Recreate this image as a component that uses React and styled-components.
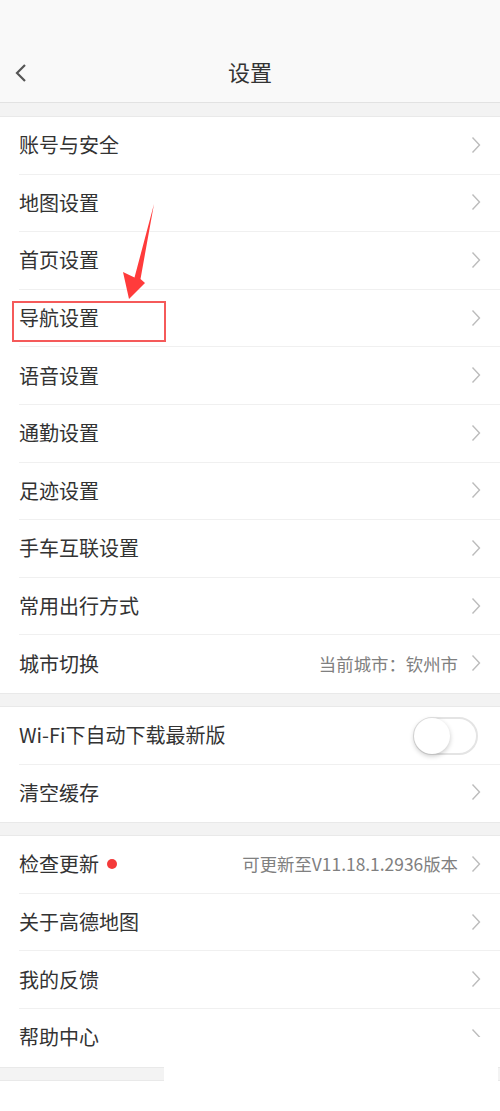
import styled, { createGlobalStyle } from 'styled-components';

const GlobalStyle = createGlobalStyle`
  html, body {
    margin: 0;
    padding: 0;
    background: #ffffff;
  }
  body {
    font-family: "Noto Sans CJK SC", "Noto Sans", sans-serif;
    color: #333333;
  }
`;

const groups = [
  [
    { label: '账号与安全' },
    { label: '地图设置' },
    { label: '首页设置' },
    { label: '导航设置' },
    { label: '语音设置' },
    { label: '通勤设置' },
    { label: '足迹设置' },
    { label: '手车互联设置' },
    { label: '常用出行方式' },
    { label: '城市切换', extra: '当前城市：钦州市' },
  ],
  [
    { label: 'Wi-Fi下自动下载最新版', toggle: true },
    { label: '清空缓存' },
  ],
  [
    { label: '检查更新', dot: true, extra: '可更新至V11.18.1.2936版本' },
    { label: '关于高德地图' },
    { label: '我的反馈' },
    { label: '帮助中心' },
  ],
];

const Chevron = () => (
  <svg width="10" height="18" viewBox="0 0 10 18">
    <path d="M1.5 1.5 L8.5 9 L1.5 16.5" fill="none" stroke="#bcbcbc" strokeWidth="1.4" />
  </svg>
);

const BackIcon = () => (
  <svg width="14" height="20" viewBox="0 0 14 20">
    <path d="M11 2 L3 10 L11 18" fill="none" stroke="#555" strokeWidth="2.2" />
  </svg>
);

const App = () => {
  return (
    <Page>
      <GlobalStyle />
      <Header>
        <StatusSpace />
        <NavBar>
          <BackButton><BackIcon /></BackButton>
          <Title>设置</Title>
        </NavBar>
      </Header>
      {groups.map((items, gi) => (
        <div key={gi}>
          <Gap first={gi === 0} />
          <Group>
            {items.map((item, i) => (
              <Row key={item.label} last={i === items.length - 1}>
                <Label>{item.label}</Label>
                {item.dot && <Dot />}
                <Spacer />
                {item.extra && <Extra>{item.extra}</Extra>}
                {item.toggle ? (
                  <Toggle><Knob /></Toggle>
                ) : (
                  <Chevron />
                )}
              </Row>
            ))}
          </Group>
        </div>
      ))}
      <Gap />
      <Mark />
      <Arrow width="500" height="1111" viewBox="0 0 500 1111">
        <polygon points="154,204 140.5,279 145,283 129,299 123,272 134.5,277.5" fill="#ff3b3b" />
      </Arrow>
      <WhitePatch />
    </Page>
  );
};

export default App;

const Page = styled.div`
  position: relative;
  width: 500px;
  height: 1111px;
  overflow: hidden;
  background: #ffffff;
`;

const Header = styled.div`
  background: #f9f9f9;
  border-bottom: 1px solid #e2e2e2;
  height: 103px;
  box-sizing: border-box;
`;

const StatusSpace = styled.div`
  height: 45px;
`;

const NavBar = styled.div`
  height: 57px;
  display: flex;
  align-items: center;
  justify-content: center;
  position: relative;
`;

const BackButton = styled.div`
  position: absolute;
  left: 14px;
  top: 18px;
  display: flex;
`;

const Title = styled.div`
  font-size: 22px;
  color: #333;
  margin-top: -5px;
`;

const Gap = styled.div`
  height: 14px;
  background: #f3f3f3;
  box-sizing: border-box;
  border-top: ${p => (p.first ? 'none' : '1px solid #e9e9e9')};
  border-bottom: 1px solid #e9e9e9;
`;

const Group = styled.div`
  background: #ffffff;
`;

const Row = styled.div`
  position: relative;
  height: 57.6px;
  box-sizing: border-box;
  display: flex;
  align-items: center;
  padding: 0 19px 2px 19px;
  &::after {
    content: '';
    display: ${p => (p.last ? 'none' : 'block')};
    position: absolute;
    left: 19px;
    right: 0;
    bottom: 0;
    height: 1px;
    background: #f0f0f0;
  }
`;

const Label = styled.div`
  font-size: 20px;
  color: #333;
`;

const Dot = styled.span`
  width: 10px;
  height: 10px;
  border-radius: 50%;
  background: #f43a3a;
  margin-left: 8px;
  margin-top: 1px;
`;

const Spacer = styled.div`
  flex: 1;
`;

const Extra = styled.div`
  font-size: 17.4px;
  color: #808080;
  margin-right: 13px;
`;

const Toggle = styled.div`
  width: 65px;
  height: 38px;
  box-sizing: border-box;
  border: 2px solid #e4e4e4;
  border-radius: 19px;
  background: #ffffff;
  margin-right: 3px;
  margin-top: 2px;
  position: relative;
`;

const Knob = styled.div`
  position: absolute;
  left: -1px;
  top: -1px;
  width: 36px;
  height: 36px;
  border-radius: 50%;
  background: #ffffff;
  box-shadow: 0 2px 5px rgba(0, 0, 0, 0.22);
`;

const Mark = styled.div`
  position: absolute;
  left: 12px;
  top: 301px;
  width: 154px;
  height: 41px;
  box-sizing: border-box;
  border: 2px solid #f55a5a;
`;

const Arrow = styled.svg`
  position: absolute;
  left: 0;
  top: 0;
  pointer-events: none;
`;

const WhitePatch = styled.div`
  position: absolute;
  left: 164px;
  top: 1037px;
  width: 334px;
  height: 74px;
  background: #ffffff;
`;
